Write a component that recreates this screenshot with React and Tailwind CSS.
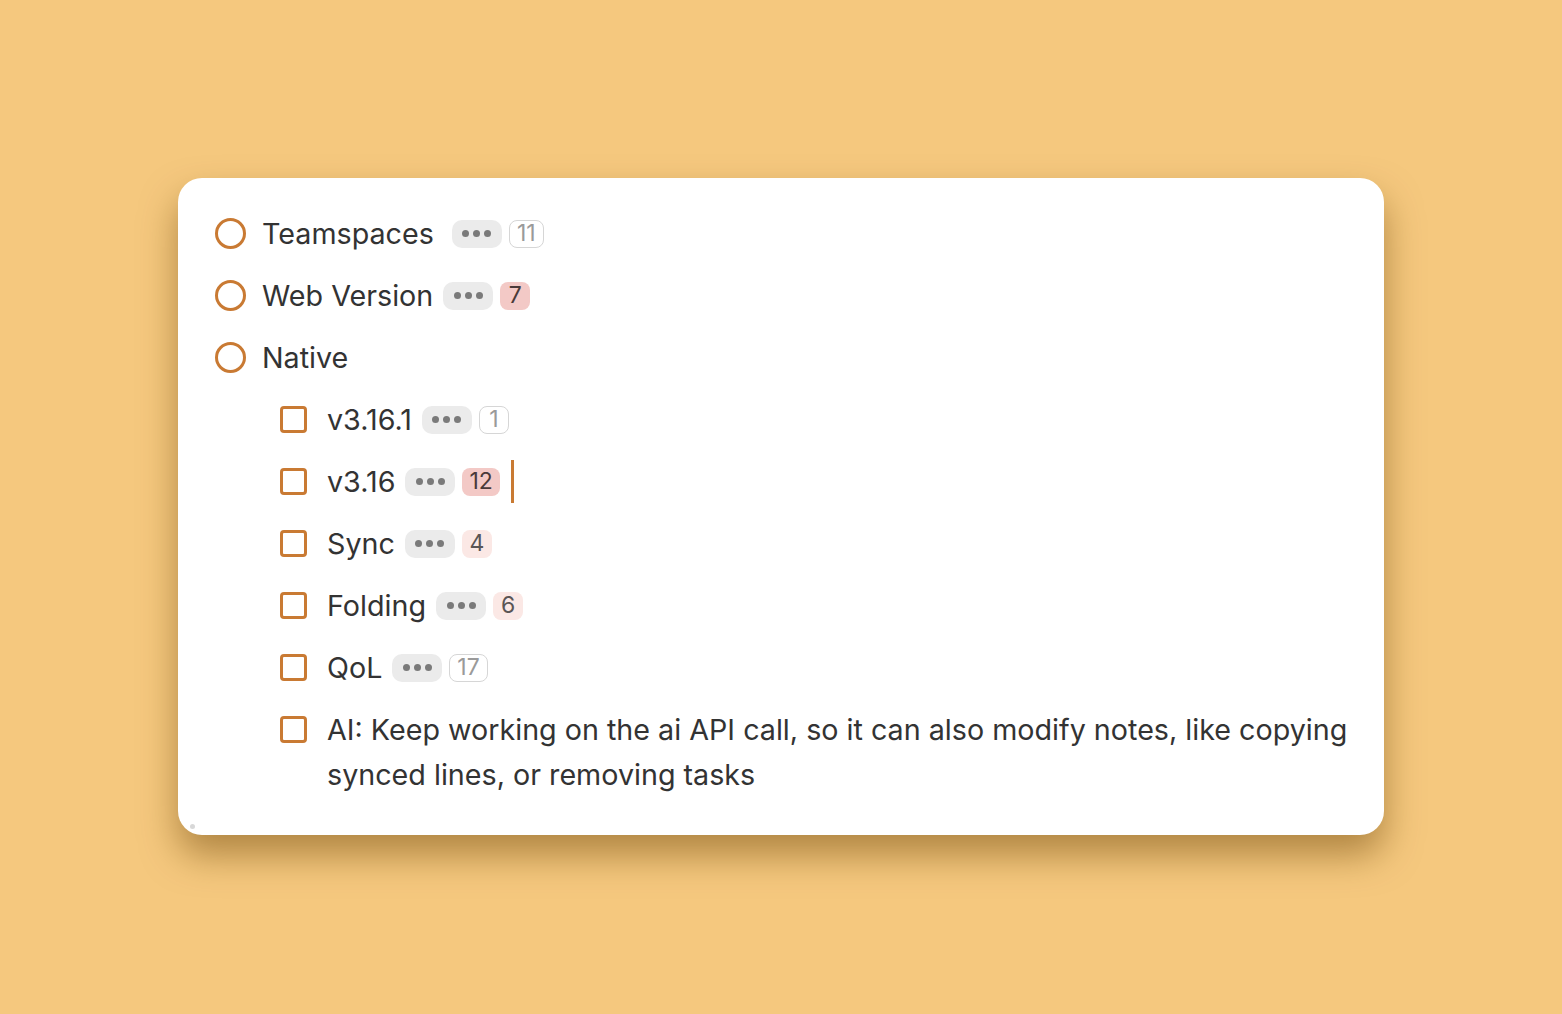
import React from "react";

const items = [
  { text: "Teamspaces", kind: "circle", count: "11", tone: "outline", extraGap: true },
  { text: "Web Version", kind: "circle", count: "7", tone: "red" },
  { text: "Native", kind: "circle" },
  { text: "v3.16.1", kind: "box", count: "1", tone: "outline" },
  { text: "v3.16", kind: "box", count: "12", tone: "red", cursor: true },
  { text: "Sync", kind: "box", count: "4", tone: "pink" },
  { text: "Folding", kind: "box", count: "6", tone: "pink" },
  { text: "QoL", kind: "box", count: "17", tone: "outline" },
  {
    text: "AI: Keep working on the ai API call, so it can also modify notes, like copying synced lines, or removing tasks",
    kind: "box",
  },
];

function Dots() {
  return (
    <span className="inline-flex h-[28px] w-[50px] items-center justify-center gap-[4px] rounded-[10px] bg-[#ebebeb]">
      <span className="h-[7px] w-[7px] rounded-full bg-[#7a7a7a]"></span>
      <span className="h-[7px] w-[7px] rounded-full bg-[#7a7a7a]"></span>
      <span className="h-[7px] w-[7px] rounded-full bg-[#7a7a7a]"></span>
    </span>
  );
}

function Count({ value, tone }) {
  const styles = {
    outline: "border-[1.5px] border-[#d6d6d6] text-[#9a9a9a]",
    red: "bg-[#f3c9c6] text-[#4a3a3a]",
    pink: "bg-[#fbe8e5] text-[#5a5555]",
  };
  return (
    <span
      className={
        "inline-flex h-[28px] min-w-[30px] items-center justify-center rounded-[8px] px-[7px] text-[23px] leading-none " +
        styles[tone]
      }
    >
      {value}
    </span>
  );
}

function Row({ item }) {
  const nested = item.kind === "box";
  return (
    <div className={"flex items-start " + (nested ? "pl-[102px]" : "pl-[37px]")}>
      <div className="flex h-[45px] w-[47px] shrink-0 items-center">
        {item.kind === "circle" ? (
          <span className="h-[31px] w-[31px] rounded-full border-[3px] border-[#c97a33]"></span>
        ) : (
          <span className="h-[27px] w-[27px] rounded-[4px] border-[3px] border-[#c97a33]"></span>
        )}
      </div>
      {item.count ? (
        <div className="flex h-[45px] items-center text-[28.7px] leading-[45px] text-[#333333]">
          <span>{item.text}</span>
          <span className={"flex items-center gap-[7px] " + (item.extraGap ? "ml-[18px]" : "ml-[10px]")}>
            <Dots />
            <Count value={item.count} tone={item.tone} />
            {item.cursor && <span className="ml-[4px] h-[43px] w-[3px] bg-[#c97a33]"></span>}
          </span>
        </div>
      ) : (
        <div className="pr-[20px] text-[28.7px] leading-[45px] text-[#333333]">{item.text}</div>
      )}
    </div>
  );
}

export default function App() {
  return (
    <div className="flex min-h-[1014px] w-full items-start justify-center bg-[#f5c87e] pt-[178px] font-['Inter','Noto_Sans',sans-serif]">
      <div className="relative w-[1206px] rounded-[24px] bg-white pb-[38px] pt-[33px] shadow-[0_20px_36px_rgba(110,70,10,0.5)]">
        <div className="flex flex-col gap-[17px]">
          {items.map((item, i) => (
            <Row key={i} item={item} />
          ))}
        </div>
        <span className="absolute bottom-[6px] left-[12px] h-[5px] w-[5px] rounded-full bg-[#d8d8d8]"></span>
      </div>
    </div>
  );
}
